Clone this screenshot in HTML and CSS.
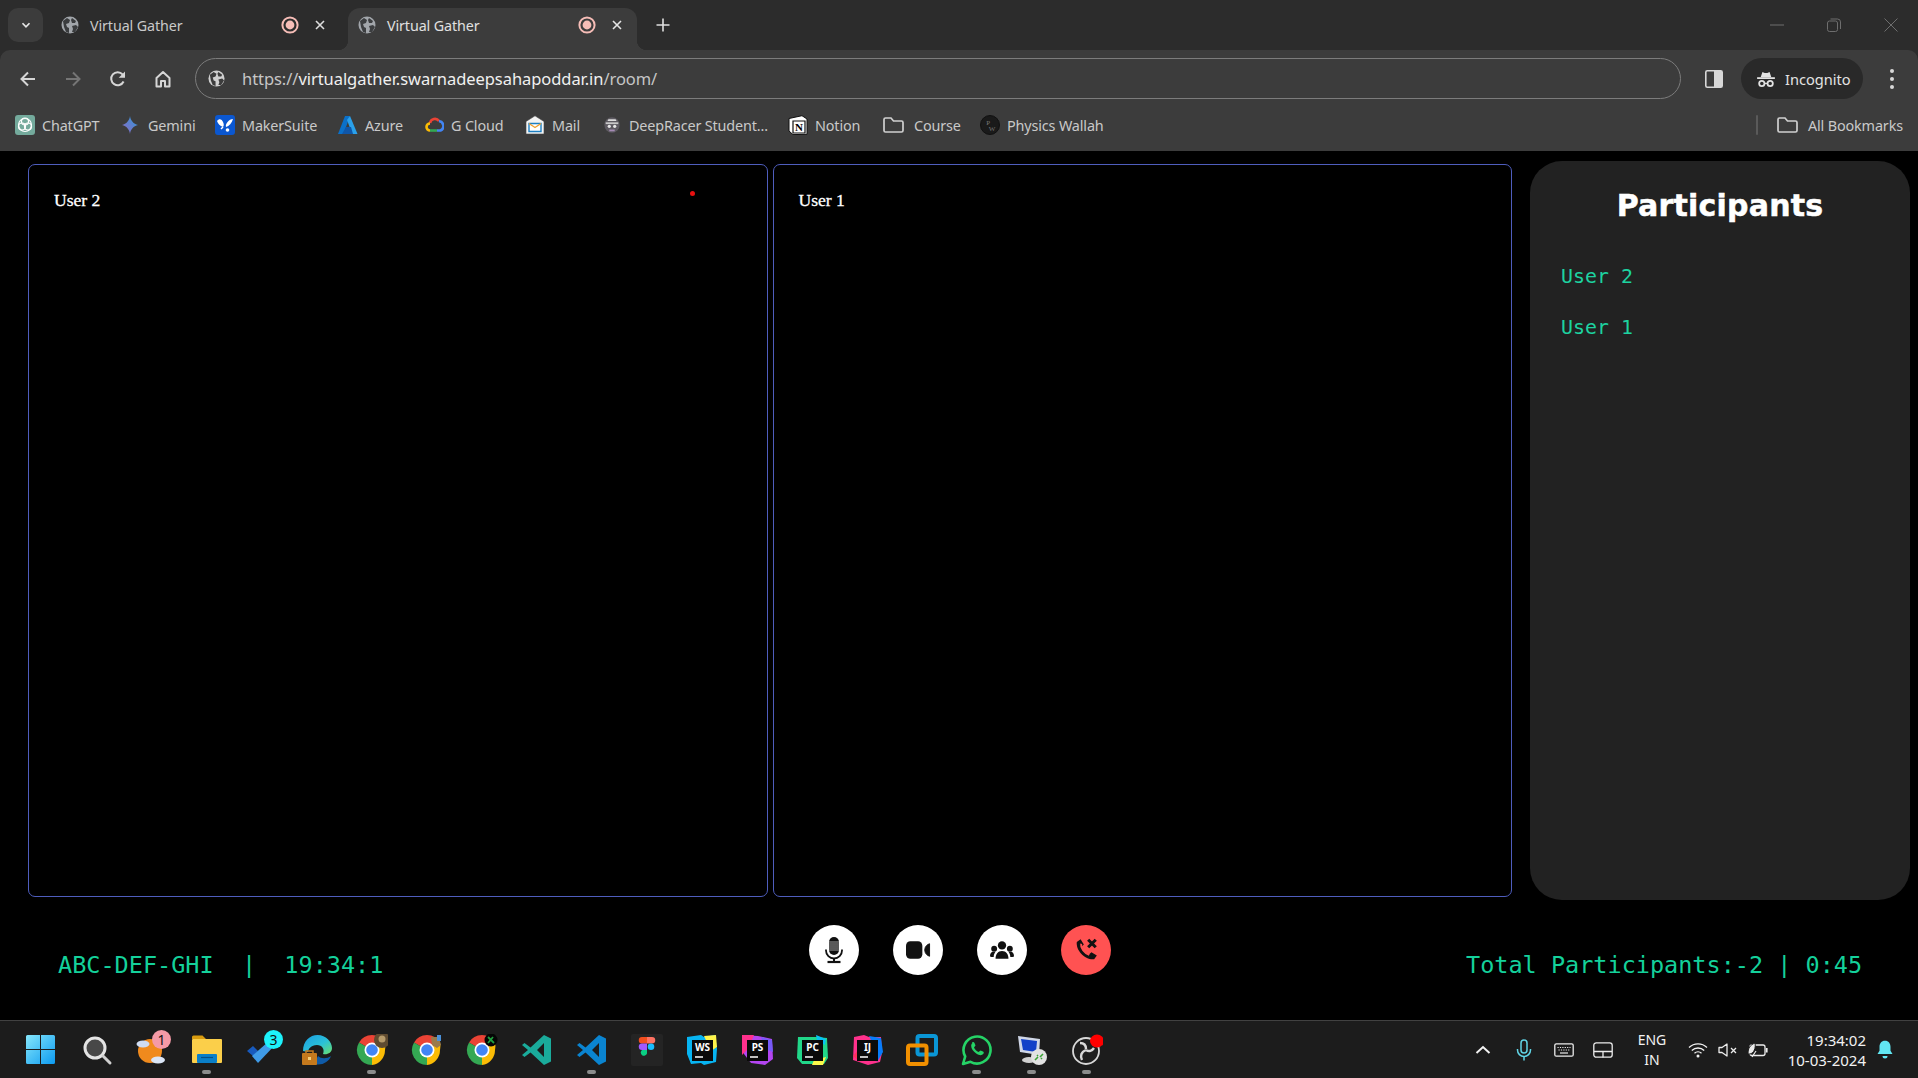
FILE: index.html
```html
<!DOCTYPE html>
<html lang="en">
<head>
<meta charset="utf-8">
<title>Virtual Gather</title>
<link rel="stylesheet" href="styles.css">
</head>
<body>
<div class="screen">
  <header class="browser">
    <div class="tabstrip">
      <button class="tab-search"><svg class="i16" viewBox="0 0 16 16"><path d="M4 6l4 4 4-4" fill="none" stroke="#e6e6e6" stroke-width="2"/></svg></button>
      <div class="tab">
        <svg class="globe" viewBox="0 0 18 18"><circle cx="9" cy="9" r="8.5" fill="#a2a6ab"/><path d="M2 5l4-3 3 2-1 3-3 1 1 3 2 1v5l-3-1-2-5zM11 2l4 3-1 2h-3l-1-3zM11 10l4-1 2 2-3 5-3 0 1-3z" fill="#3a3c3e"/></svg>
        <span class="tab-title">Virtual Gather</span>
        <svg class="rec" viewBox="0 0 18 18"><circle cx="9" cy="9" r="7.6" fill="none" stroke="#f6bdb7" stroke-width="2"/><circle cx="9" cy="9" r="4.4" fill="#f6bdb7"/></svg>
        <svg class="close" viewBox="0 0 12 12"><path d="M2 2l8 8M10 2l-8 8" stroke="#dedede" stroke-width="1.6"/></svg>
      </div>
      <div class="tab tab-active">
        <svg class="globe" viewBox="0 0 18 18"><circle cx="9" cy="9" r="8.5" fill="#a2a6ab"/><path d="M2 5l4-3 3 2-1 3-3 1 1 3 2 1v5l-3-1-2-5zM11 2l4 3-1 2h-3l-1-3zM11 10l4-1 2 2-3 5-3 0 1-3z" fill="#3c3e40"/></svg>
        <span class="tab-title">Virtual Gather</span>
        <svg class="rec" viewBox="0 0 18 18"><circle cx="9" cy="9" r="7.6" fill="none" stroke="#f6bdb7" stroke-width="2"/><circle cx="9" cy="9" r="4.4" fill="#f6bdb7"/></svg>
        <svg class="close" viewBox="0 0 12 12"><path d="M2 2l8 8M10 2l-8 8" stroke="#e6e6e6" stroke-width="1.6"/></svg>
      </div>
      <svg class="newtab" viewBox="0 0 16 16"><path d="M8 1.500v13M1.500 8h13" stroke="#e0e0e0" stroke-width="1.600"/></svg>
      <div class="winctl">
        <svg class="wc" viewBox="0 0 14 14"><path d="M0 7h14" stroke="#6e6e6e" stroke-width="1"/></svg>
        <svg class="wc" viewBox="0 0 14 14"><rect x=".5" y="3" width="10" height="10.500" rx="2" fill="none" stroke="#6e6e6e"/><path d="M3.500 1h7a3 3 0 0 1 3 3v7" fill="none" stroke="#6e6e6e"/></svg>
        <svg class="wc" viewBox="0 0 14 14"><path d="M.5.5l13 13M13.500.5l-13 13" stroke="#6e6e6e" stroke-width="1"/></svg>
      </div>
    </div>
    <div class="chrome-body">
      <div class="toolbar">
        <svg class="nav" viewBox="0 0 18 18"><path d="M16 9H3M9 2.500L2.500 9 9 15.500" fill="none" stroke="#d6d6d6" stroke-width="2"/></svg>
        <svg class="nav" viewBox="0 0 18 18"><path d="M2 9h13M9 2.500L15.500 9 9 15.500" fill="none" stroke="#757575" stroke-width="2"/></svg>
        <svg class="nav" viewBox="0 0 18 18"><path d="M14.600 11.500A6.500 6.500 0 1 1 13.600 4.400L15.500 6.500" fill="none" stroke="#d6d6d6" stroke-width="2"/><path d="M16 1.500v6.300H9.700z" fill="#d6d6d6"/></svg>
        <svg class="nav" viewBox="0 0 18 18"><path d="M2.500 8L9 2l6.500 6v8.500H11V11H7v5.500H2.500z" fill="none" stroke="#d6d6d6" stroke-width="2" stroke-linejoin="round"/></svg>
        <div class="omnibox">
          <svg class="omni-globe" viewBox="0 0 18 18"><circle cx="9" cy="9" r="8.500" fill="#d0d0d0"/><path d="M2 5l4-3 3 2-1 3-3 1 1 3 2 1v5l-3-1-2-5zM11 2l4 3-1 2h-3l-1-3zM11 10l4-1 2 2-3 5-3 0 1-3z" fill="#3c3c3c"/></svg>
          <span class="url"><span class="url-dim">https://</span>virtualgather.swarnadeepsahapoddar.in<span class="url-dim">/room/</span></span>
        </div>
        <svg class="sidepanel" viewBox="0 0 18 18"><rect x=".8" y=".8" width="16.400" height="16.400" rx="1.500" fill="none" stroke="#d8d8d8" stroke-width="1.600"/><rect x="9" y="1" width="8" height="16" fill="#d8d8d8"/></svg>
        <div class="incognito">
          <svg class="inc-icon" viewBox="0 0 20 18"><path d="M4 7l2-6 2.500 1.200h3L14 1l2 6z" fill="#e2e2e2"/><path d="M0 8h20" stroke="#e2e2e2" stroke-width="2"/><circle cx="5.300" cy="14" r="3" fill="none" stroke="#e2e2e2" stroke-width="2"/><circle cx="14.700" cy="14" r="3" fill="none" stroke="#e2e2e2" stroke-width="2"/><path d="M8.300 14h3.400" stroke="#e2e2e2" stroke-width="1.500"/></svg>
          <span>Incognito</span>
        </div>
        <svg class="dots" viewBox="0 0 6 22"><circle cx="3" cy="3" r="2" fill="#d8d8d8"/><circle cx="3" cy="11" r="2" fill="#d8d8d8"/><circle cx="3" cy="19" r="2" fill="#d8d8d8"/></svg>
      </div>
      <nav class="bookmarks">
        <a class="bm"><svg class="fav" viewBox="0 0 20 20"><rect width="20" height="20" rx="3" fill="#74aa9c"/><g fill="none" stroke="#fff" stroke-width="1.200"><circle cx="10" cy="6.500" r="3.500"/><circle cx="7" cy="11.500" r="3.500"/><circle cx="13" cy="11.500" r="3.500"/><circle cx="10" cy="10" r="6.500"/></g></svg><span>ChatGPT</span></a>
        <a class="bm"><svg class="fav" viewBox="0 0 20 20"><defs><linearGradient id="gem" x1="0" y1="1" x2="1" y2="0"><stop offset="0" stop-color="#9168c0"/><stop offset=".6" stop-color="#5684d1"/><stop offset="1" stop-color="#1ba1e3"/></linearGradient></defs><path d="M9 1c.6 4.500 3.500 8 8 9-4.500 1-7.400 4.500-8 9-.6-4.500-3.500-8-8-9 4.500-1 7.400-4.500 8-9z" fill="url(#gem)"/></svg><span>Gemini</span></a>
        <a class="bm"><svg class="fav" viewBox="0 0 20 20"><rect width="20" height="20" rx="3" fill="#0b57d0"/><path d="M2 6c2-3 5-2 6 1 1 2 1 4 0 5C5 11 3 9 2 6zM18 4c-1 4-4 7-7 8-1-3 3-8 7-8z" fill="#fff"/><circle cx="12.500" cy="15" r="1.800" fill="#fff"/><path d="M6 14l2-2" stroke="#fff" stroke-width="1.500"/></svg><span>MakerSuite</span></a>
        <a class="bm"><svg class="fav" viewBox="0 0 20 20"><path d="M7 1h5L5.500 19H0z" fill="#0a70c9"/><path d="M12 1l7.500 18h-5.200L9 5z" fill="#2aa0ea"/><path d="M8 12h5l2 7H4z" fill="#0f56a8"/></svg><span>Azure</span></a>
        <a class="bm"><svg class="fav" viewBox="0 0 20 20"><path d="M6 8a5 5 0 0 1 9-2" fill="none" stroke="#ea4335" stroke-width="2.600"/><path d="M15 6a5 5 0 0 1 1.500 9.500H13" fill="none" stroke="#4285f4" stroke-width="2.600"/><path d="M13 15.500H6" stroke="#34a853" stroke-width="2.600"/><path d="M6 15.500A3.500 3.500 0 0 1 6 8.500" fill="none" stroke="#fbbc05" stroke-width="2.600"/></svg><span>G Cloud</span></a>
        <a class="bm"><svg class="fav" viewBox="0 0 20 20"><path d="M10 .8L19 6.500V19H1V6.500z" fill="#f4f4f4" stroke="#444" stroke-width=".6"/><path d="M4 8.500h12v8H4z" fill="#fff" stroke="#1d7fc2" stroke-width="1.400"/><path d="M4 8.500l6 4 6-4" fill="none" stroke="#f0a030" stroke-width="1.400"/></svg><span>Mail</span></a>
        <a class="bm"><svg class="fav fav-small" viewBox="0 0 20 20"><circle cx="10" cy="10" r="8.500" fill="#5d5a61"/><path d="M3 7h14v2H3z" fill="#c8c8c8"/><circle cx="7" cy="11.500" r="1.800" fill="#e6e6e6"/><circle cx="13" cy="11.500" r="1.800" fill="#e6e6e6"/><path d="M6 3.500h8l1 2H5z" fill="#ddd"/><path d="M7 15h6v2H7z" fill="#a58ab4"/></svg><span>DeepRacer Student...</span></a>
        <a class="bm"><svg class="fav" viewBox="0 0 20 20"><path d="M1 3.500L14 .7 19 4v15.300L5 19.600 1 16z" fill="#fff" stroke="#111" stroke-width="1"/><path d="M5 6h12v12H5z" fill="#fff" stroke="#111" stroke-width="1.200"/><text class="fav-n" x="11" y="16" text-anchor="middle">N</text></svg><span>Notion</span></a>
        <a class="bm bm-folder"><svg class="fav-folder" viewBox="0 0 21 18"><path d="M1 3.500a1.500 1.500 0 0 1 1.500-1.500H8l2.500 3h8a1.500 1.500 0 0 1 1.500 1.500v8a1.500 1.500 0 0 1-1.500 1.500h-16A1.500 1.500 0 0 1 1 14.500z" fill="none" stroke="#d0d0d0" stroke-width="1.700"/></svg><span>Course</span></a>
        <a class="bm"><svg class="fav" viewBox="0 0 20 20"><circle cx="10" cy="10" r="9.500" fill="#1a1a1a" stroke="#111"/><text class="fav-pw" x="8" y="10" text-anchor="middle">P</text><text class="fav-pw" x="12" y="16" text-anchor="middle">W</text></svg><span>Physics Wallah</span></a>
        <i class="bm-sep"></i>
        <a class="bm"><svg class="fav-folder" viewBox="0 0 21 18"><path d="M1 3.500a1.500 1.500 0 0 1 1.500-1.500H8l2.500 3h8a1.500 1.500 0 0 1 1.500 1.500v8a1.500 1.500 0 0 1-1.500 1.500h-16A1.500 1.500 0 0 1 1 14.500z" fill="none" stroke="#d0d0d0" stroke-width="1.700"/></svg><span>All Bookmarks</span></a>
      </nav>
    </div>
  </header>

  <main class="room">
    <div class="stage">
      <div class="tiles">
        <section class="tile"><span class="tile-name">User 2</span><i class="speck"></i></section>
        <section class="tile"><span class="tile-name">User 1</span></section>
      </div>
      <aside class="panel">
        <h2 class="panel-title">Participants</h2>
        <ul class="people">
          <li>User 2</li>
          <li>User 1</li>
        </ul>
      </aside>
    </div>
    <footer class="callbar">
      <div class="info info-left">ABC-DEF-GHI&nbsp; |&nbsp; 19:34:1</div>
      <div class="controls">
        <button class="ctl"><svg viewBox="0 0 24 28" class="ctl-i"><rect x="7" y="1" width="10" height="18" rx="5" fill="#111"/><path d="M7 6h10M7 8h10M7 10h10M7 12h10M7 14h10" stroke="#c8c8c8" stroke-width=".8"/><path d="M4 13.500v1a8 8 0 0 0 16 0v-1" fill="none" stroke="#111" stroke-width="1.800"/><path d="M12 22v3" stroke="#111" stroke-width="2"/><path d="M5.500 26h13" stroke="#111" stroke-width="2.200"/></svg></button>
        <button class="ctl"><svg viewBox="0 0 26 18" class="ctl-v"><rect x="0" y="0" width="17" height="18" rx="4.500" fill="#111"/><path d="M24.500 2.500v13c-2.500-.8-5-3-5-6.500s2.500-5.700 5-6.500z" fill="#111" stroke="#111" stroke-linejoin="round"/></svg></button>
        <button class="ctl"><svg viewBox="0 0 26 20" class="ctl-g"><circle cx="13" cy="4.500" r="4.500" fill="#111"/><path d="M6 19c0-5 2.500-8.500 7-8.500s7 3.500 7 8.500z" fill="#111"/><circle cx="4.500" cy="8" r="3.200" fill="#111"/><circle cx="21.500" cy="8" r="3.200" fill="#111"/><path d="M0 16c0-3 1.500-5 4.500-5 .6 0 1 .1 1.500.3C4.700 12.800 4 15 4 17H1.500C.5 17 0 16.600 0 16zM26 16c0-3-1.500-5-4.500-5-.6 0-1 .1-1.500.3 1.300 1.500 2 3.700 2 5.700h2.500c1 0 1.500-.4 1.500-1z" fill="#111"/></svg></button>
        <button class="ctl ctl-end"><svg viewBox="0 0 24 24" class="ctl-p"><path d="M3.500 4.500L7 2l3 5-2.500 2.300c1 3.200 3.800 6 7 7L17 14l5 3-2.500 3.500C11.500 21.500 2.500 12.500 3.500 4.500z" fill="#111"/><path d="M7.500 6.200C6.800 10 10.500 14.800 15 16.500" fill="none" stroke="#ff5252" stroke-width="1.800"/><path d="M14 2.500l7 7M21 2.500l-7 7" stroke="#111" stroke-width="2.800"/></svg></button>
      </div>
      <div class="info info-right">Total Participants:-2 | 0:45</div>
    </footer>
  </main>

  <div class="taskbar">
    <div class="apps">
      <div class="app"><svg class="ti ti-start" viewBox="0 0 29 29"><defs><linearGradient id="win" x1="0" y1="0" x2="1" y2="1"><stop offset="0" stop-color="#86e7fb"/><stop offset="1" stop-color="#0c9af0"/></linearGradient></defs><path d="M0 1.500A1.500 1.500 0 0 1 1.500 0H14v14H0zM15 0h12.500A1.500 1.500 0 0 1 29 1.500V14H15zM0 15h14v14H1.500A1.500 1.500 0 0 1 0 27.500zM15 15h14v12.500a1.500 1.500 0 0 1-1.500 1.500H15z" fill="url(#win)"/></svg></div>
      <div class="app"><svg class="ti" viewBox="0 0 32 32"><circle cx="14" cy="14" r="10" fill="#484848" stroke="#e4e4e4" stroke-width="3"/><path d="M22 22l7 7" stroke="#cfcfcf" stroke-width="3" stroke-linecap="round"/></svg></div>
      <div class="app"><svg class="ti" viewBox="0 0 32 32"><circle cx="14" cy="17" r="12" fill="#f08a1d"/><ellipse cx="7" cy="10" rx="6.500" ry="3.500" fill="#cfdcf2"/><ellipse cx="22" cy="26" rx="7" ry="3.500" fill="#dbe6f7"/></svg><b class="badge badge-pink">1</b></div>
      <div class="app app-on"><svg class="ti" viewBox="0 0 32 32"><path d="M1 3a1.500 1.500 0 0 1 1.500-1.500h9L15 5h-14z" fill="#d99c0f"/><rect x="1" y="5" width="30" height="24" rx="1" fill="#fbcf4a"/><rect x="6" y="20" width="20" height="9" rx="1" fill="#0a7fc8"/><path d="M10 23.500h12" stroke="#064f85" stroke-width="1.200"/></svg></div>
      <div class="app"><svg class="ti" viewBox="0 0 32 32"><path d="M1 17l6-5 5 5-5 5z" fill="#185abd"/><path d="M6 22L22 8l6 4-16 17z" fill="#3f9be8"/></svg><b class="badge badge-cyan">3</b></div>
      <div class="app"><svg class="ti" viewBox="0 0 32 32"><defs><linearGradient id="edge" x1="0" y1="0" x2="1" y2="1"><stop offset="0" stop-color="#1b9de2"/><stop offset=".55" stop-color="#2ac0d8"/><stop offset="1" stop-color="#6ce06a"/></linearGradient></defs><path d="M2 17C2 7 9 1 16.500 1 25 1 31 8 31 14c0 5-5 7-9 6 2-5-1-9-6-9-6 0-9 4-9 7z" fill="url(#edge)"/><path d="M13 30c8 2 15-2 17-8-4 3-10 3-13 0z" fill="#0f5ba8"/><rect x="1" y="19" width="15" height="12" rx="1" fill="#c4791d"/><path d="M5 19v-2h7v2" fill="none" stroke="#c4791d" stroke-width="1.500"/><rect x="7" y="23" width="3" height="3" fill="#f4cf7a"/></svg></div>
      <div class="app app-on"><svg class="ti" viewBox="0 0 32 32"><use href="#chrome"/><circle cx="26" cy="6" r="8" fill="#5f4b30"/><circle cx="26" cy="5" r="3.500" fill="#b59a6a"/></svg></div>
      <div class="app"><svg class="ti" viewBox="0 0 32 32"><use href="#chrome"/><path d="M20 3h8l2 8-4 3-5-3z" fill="#9a7a4a"/><path d="M26 1h4v6h-4z" fill="#4a90d8"/></svg></div>
      <div class="app"><svg class="ti" viewBox="0 0 32 32"><use href="#chrome"/><circle cx="25" cy="6" r="6.500" fill="#050505"/><path d="M22 3l6 6M27 3l-5 6" stroke="#20a040" stroke-width="1.800"/></svg></div>
      <div class="app"><svg class="ti" viewBox="0 0 32 32"><use href="#vs" fill="#1aab9b"/></svg></div>
      <div class="app app-on"><svg class="ti" viewBox="0 0 32 32"><use href="#vs" fill="#0a84d0"/></svg></div>
      <div class="app"><svg class="ti" viewBox="0 0 32 32"><rect width="32" height="32" rx="2" fill="#242424"/><path d="M11 3h5v6.500h-5a3.200 3.200 0 0 1 0-6.500z" fill="#f24e1e"/><path d="M16 3h5a3.200 3.200 0 0 1 0 6.500h-5z" fill="#ff7262"/><path d="M11 9.500h5V16h-5a3.200 3.200 0 0 1 0-6.500z" fill="#a259ff"/><circle cx="20" cy="12.800" r="3.300" fill="#1abcfe"/><path d="M11 16h5v3.500a3.200 3.200 0 1 1-5-3.500z" fill="#0acf83"/></svg></div>
      <div class="app"><svg class="ti" viewBox="0 0 32 32"><path d="M1 3l14-2 3 2 11-2 2 14-1 13-12 3-3-2-10 1L1 20z" fill="#07b4f2"/><path d="M18 2l12-1 1 12-6 4z" fill="#fff34a"/><rect x="6" y="6" width="21" height="21" fill="#0a0a0a"/><text class="jb" x="16.500" y="17" text-anchor="middle">WS</text><path d="M9 23h8" stroke="#fff" stroke-width="1.500"/></svg></div>
      <div class="app"><svg class="ti" viewBox="0 0 32 32"><path d="M1 1l16 1 14 3 1 20-8 6-14-2-7-9z" fill="#b345f1"/><path d="M1 1l12 0-6 14-6 6z" fill="#ff318c"/><path d="M20 3l11 3 1 12-8-3z" fill="#765af8"/><rect x="6" y="6" width="21" height="21" fill="#0a0a0a"/><text class="jb" x="16.500" y="17" text-anchor="middle">PS</text><path d="M9 23h8" stroke="#fff" stroke-width="1.500"/></svg></div>
      <div class="app"><svg class="ti" viewBox="0 0 32 32"><path d="M2 3l18 0 11 1 1 20-4 6H6l-5-6z" fill="#21d789"/><path d="M18 26l12-3-3 8-11 0z" fill="#fcf84a"/><path d="M20 1l10 4-1 6-8-4z" fill="#07c3f2"/><rect x="6" y="6" width="21" height="21" fill="#0a0a0a"/><text class="jb" x="16.500" y="17" text-anchor="middle">PC</text><path d="M9 23h8" stroke="#fff" stroke-width="1.500"/></svg></div>
      <div class="app"><svg class="ti" viewBox="0 0 32 32"><path d="M3 3l10-2 5 2 12 0 1 16-2 9-12 3-9-3-6-2z" fill="#ff318c"/><path d="M18 2l12 2 2 14-6 10-4-18z" fill="#087cfa"/><path d="M2 22l7-8 0 14z" fill="#fe315d"/><rect x="6" y="6" width="21" height="21" fill="#0a0a0a"/><text class="jb" x="16.500" y="17" text-anchor="middle">IJ</text><path d="M9 23h8" stroke="#fff" stroke-width="1.500"/></svg></div>
      <div class="app"><svg class="ti" viewBox="0 0 32 32"><rect x="11.500" y="2" width="18.500" height="18.500" rx="2" fill="none" stroke="#0a96d6" stroke-width="4"/><rect x="2" y="11.500" width="18.500" height="18.500" rx="2" fill="none" stroke="#f29000" stroke-width="4"/></svg></div>
      <div class="app app-on"><svg class="ti" viewBox="0 0 32 32"><path d="M2 30l2.200-7.500A13.500 13.500 0 1 1 9.500 27.800z" fill="none" stroke="#25d366" stroke-width="2.600" stroke-linejoin="round"/><path d="M11 8.500c1-.8 2-.5 2.500.5l1 2.500-1.500 2c1 2 2.500 3.500 4.500 4.500l2-1.500 2.500 1c1 .5 1 1.500.2 2.500-1.500 1.700-4 1.500-7-.5-3-2-5-5-5-7.500 0-1.300.4-2.300 1.300-3z" fill="#25d366"/></svg></div>
      <div class="app app-on"><svg class="ti" viewBox="0 0 32 32"><path d="M2 2l22 3-1 16-19-3z" fill="#cfd6e6"/><path d="M5 5l16 2-1 11-13-2z" fill="#1240c8"/><ellipse cx="13" cy="26" rx="7" ry="3" fill="#d0d0d0"/><circle cx="23" cy="23" r="8" fill="#e2e2e2"/><path d="M19 26l3-3M27 20l-3 3M21 21l1 1M25 24l1 1" stroke="#3aa335" stroke-width="1.600"/></svg></div>
      <div class="app app-on"><svg class="ti" viewBox="0 0 32 32"><circle cx="15" cy="17" r="13" fill="#1e1e1e" stroke="#d8d8d8" stroke-width="1.800"/><path d="M9 9c4 0 6 2 6 6M23 14c-2 3-5 4-8 2M11 26c-2-4-1-8 4-10" fill="none" stroke="#d8d8d8" stroke-width="2.400"/><ellipse cx="26" cy="7" rx="7" ry="6.500" fill="#ff0000"/></svg></div>
    </div>
    <div class="tray">
      <svg class="tray-chev" viewBox="0 0 16 10"><path d="M1.500 8L8 2l6.500 6" fill="none" stroke="#f2f2f2" stroke-width="2"/></svg>
      <svg class="tray-mic" viewBox="0 0 16 22"><rect x="5" y="1" width="6" height="13" rx="3" fill="none" stroke="#61d5e6" stroke-width="1.500"/><path d="M1.500 10v1a6.500 6.500 0 0 0 13 0v-1M8 18v3.500" fill="none" stroke="#61d5e6" stroke-width="1.500"/></svg>
      <svg class="tray-kbd" viewBox="0 0 20 14"><rect x=".8" y=".8" width="18.400" height="12.400" rx="1.500" fill="none" stroke="#ececec" stroke-width="1.300"/><path d="M3.500 4.500h13M4.500 7h11" stroke="#ececec" stroke-width="1.200" stroke-dasharray="1.200 1.200"/><path d="M6 10h8" stroke="#ececec" stroke-width="1.200"/></svg>
      <svg class="tray-pad" viewBox="0 0 20 16"><rect x=".8" y=".8" width="18.400" height="14.400" rx="2.500" fill="none" stroke="#ececec" stroke-width="1.300"/><path d="M1 9.500h18M10 9.500v6" stroke="#ececec" stroke-width="1.300"/></svg>
      <div class="lang"><span>ENG</span><span>IN</span></div>
      <svg class="tray-wifi" viewBox="0 0 20 16"><path d="M1 5.500a13 13 0 0 1 18 0M3.800 8.500a9 9 0 0 1 12.400 0M6.500 11.300a5 5 0 0 1 7 0" fill="none" stroke="#f2f2f2" stroke-width="1.300"/><circle cx="10" cy="14" r="1.500" fill="#f2f2f2"/></svg>
      <svg class="tray-vol" viewBox="0 0 20 14"><path d="M1 4.500h3L9 1v12L4 9.500H1z" fill="none" stroke="#ececec" stroke-width="1.300" stroke-linejoin="round"/><path d="M13 5l5 5M18 5l-5 5" stroke="#ececec" stroke-width="1.300"/></svg>
      <svg class="tray-bat" viewBox="0 0 21 16"><rect x="3" y="3" width="15" height="10.500" rx="2" fill="none" stroke="#ececec" stroke-width="1.300"/><rect x="18.800" y="6" width="1.800" height="4.500" fill="#ececec"/><path d="M1 12c0-6 2-9 7-11 1 5-1 10-5 11z" fill="#ececec" stroke="#1c1c1c"/><path d="M5 15l4-6" stroke="#ececec" stroke-width="1.200"/></svg>
      <div class="clock"><span>19:34:02</span><span>10-03-2024</span></div>
      <svg class="tray-bell" viewBox="0 0 16 20"><path d="M8 .8c3.600 0 5.500 2.700 5.500 6v4l2 3.200H.5l2-3.200v-4C2.500 3.500 4.400.8 8 .8z" fill="#61e6f2"/><path d="M5.500 16h5a2.500 2.500 0 0 1-5 0z" fill="#61e6f2"/></svg>
    </div>
  </div>
</div>
<svg class="defs" width="0" height="0">
  <defs>
    <symbol id="chrome" viewBox="0 0 32 32">
      <path d="M16 16L3 8.500A15 15 0 0 1 29 8.500z" fill="#ea4335"/>
      <path d="M16 16L3 8.500A15 15 0 0 0 16 31z" fill="#34a853"/>
      <path d="M16 16H29A15 15 0 0 1 16 31L16 16z" fill="#fbbc05"/>
      <path d="M16 16L29 8.500A15 15 0 0 1 29 16z" fill="#fbbc05"/>
      <circle cx="16" cy="16" r="7.500" fill="#fff"/>
      <circle cx="16" cy="16" r="5.800" fill="#4285f4"/>
    </symbol>
    <symbol id="vs" viewBox="0 0 32 32">
      <path d="M23 1l7 3.500v23L23 31 9.500 18.500 3.500 23 1 21l6-5-6-5 2.500-2 6 4.500zM23 9l-7 7 7 7z"/>
    </symbol>
  </defs>
</svg>
</body>
</html>
```
FILE: styles.css
```css
* { box-sizing: border-box; }
html, body { margin: 0; padding: 0; background: #000; }
body { width: 1918px; height: 1078px; overflow: hidden; }
svg { display: block; flex: none; }
.defs { position: absolute; }
.screen { display: flex; flex-direction: column; height: 1078px; font-family: "Noto Sans", "Open Sans", sans-serif; }

/* tab strip */
.browser { flex: none; background: #2c2c2c; }
.tabstrip { display: flex; align-items: flex-start; height: 50px; padding: 8px 0 0 8px; }
.tab-search { width: 35px; height: 34px; border: 0; padding: 0; border-radius: 10px; background: #3c3c3c; display: flex; align-items: center; justify-content: center; margin-right: 8px; }
.i16 { width: 14px; height: 14px; }
.tab { position: relative; width: 289px; height: 42px; margin-right: 8px; display: flex; align-items: center; padding: 0 0 8px 10px; color: #c9c9c9; font-size: 14.3px; border-radius: 12px 12px 0 0; }
.tab-active { background: #3c3c3c; color: #e0e0e0; }
.tab-active::before, .tab-active::after { content: ""; position: absolute; bottom: 0; width: 10px; height: 10px; }
.tab-active::before { left: -10px; background: radial-gradient(circle at 0 0, transparent 10px, #3c3c3c 10.500px); }
.tab-active::after { right: -10px; background: radial-gradient(circle at 100% 0, transparent 10px, #3c3c3c 10.500px); }
.globe { width: 18px; height: 18px; margin-right: 11px; }
.tab-title { width: 184px; white-space: nowrap; letter-spacing: -.1px; }
.rec { width: 18px; height: 18px; margin-left: 7px; }
.close { width: 12px; height: 12px; margin-left: 15px; }
.newtab { width: 16px; height: 16px; margin: 9px 0 0 10px; }
.winctl { margin-left: auto; display: flex; gap: 43px; padding: 10px 20px 0 0; }
.wc { width: 14px; height: 14px; }

/* toolbar */
.chrome-body { background: #3c3c3c; border-radius: 10px 10px 0 0; height: 101px; }
.toolbar { display: flex; align-items: center; height: 57px; padding-left: 19px; }
.nav { width: 18px; height: 18px; margin-right: 27px; }
.omnibox { width: 1486px; height: 41px; margin-left: -4px; border: 1px solid #7c7c7c; border-radius: 21px; display: flex; align-items: center; padding-left: 12px; }
.omni-globe { width: 17px; height: 17px; margin-right: 17px; }
.url { color: #f0f0f0; font-size: 16.5px; letter-spacing: -.06px; white-space: nowrap; }
.url-dim { color: #c6c6c6; }
.sidepanel { width: 18px; height: 18px; margin-left: 24px; }
.incognito { width: 122px; height: 41px; margin-left: 18px; background: #292929; border-radius: 21px; display: flex; align-items: center; padding-left: 16px; color: #e3e3e3; font-size: 14.6px; }
.inc-icon { width: 18px; height: 16px; margin-right: 10px; }
.dots { width: 6px; height: 22px; margin-left: 26px; }

/* bookmarks */
.bookmarks { display: grid; grid-template-columns: 106px 94px 123px 86px 101px 78px 185px 95px 97px 776px 21px 1fr; align-items: center; height: 44px; padding: 0 0 8px 15px; }
.bm { display: flex; align-items: center; font-size: 14.4px; letter-spacing: -.15px; color: #c9c9c9; white-space: nowrap; }
.fav { width: 20px; height: 20px; margin-right: 7px; }
.fav-small { width: 18px; height: 18px; margin-right: 8px; }
.fav-folder { width: 21px; height: 18px; margin-right: 10px; }
.fav-n { font: 700 11px "Liberation Serif", serif; fill: #000; }
.fav-pw { font: 400 7px "Liberation Serif", serif; fill: #777; }
.bm-sep { height: 20px; width: 2px; background: #5a5a5a; border-radius: 1px; }

/* room */
.room { flex: none; height: 869px; background: #000; display: flex; flex-direction: column; }
.stage { display: flex; align-items: flex-start; padding-left: 28px; height: 749px; }
.tiles { display: flex; gap: 5px; margin-top: 13px; }
.tile { position: relative; width: 739.5px; height: 733px; border: 1px solid #4e5dbd; border-radius: 7px; padding: 24px 25px; }
.tile-name { color: #fff; font: 400 17.600px "Liberation Serif", serif; -webkit-text-stroke: .3px #fff; }
.speck { position: absolute; left: 661px; top: 26px; width: 5px; height: 5px; border-radius: 50%; background: #e81010; }
.panel { width: 380px; height: 739px; margin: 10px 0 0 18px; background: #222; border-radius: 32px; padding: 27px 20px 0 31px; }
.panel-title { margin: 0 0 0 -11px; text-align: center; color: #fff; font: 700 30px "DejaVu Sans", sans-serif; letter-spacing: .2px; line-height: 36px; -webkit-text-stroke: .5px #fff; }
.people { list-style: none; margin: 27px 0 0; padding: 0; color: #1dd3a0; font: 400 19.900px "DejaVu Sans Mono", monospace; }
.people li { height: 51px; line-height: 51px; }

/* call bar */
.callbar { display: flex; align-items: flex-start; height: 120px; padding-left: 58px; }
.info { color: #14d19b; font: 400 23.500px/28px "DejaVu Sans Mono", monospace; white-space: nowrap; margin-top: 51px; }
.info-left { width: 751px; }
.controls { width: 302px; display: flex; justify-content: space-between; margin-top: 25px; }
.ctl { width: 50px; height: 50px; border: 0; padding: 0; border-radius: 50%; background: #fff; display: flex; align-items: center; justify-content: center; }
.ctl-end { background: #ff5252; }
.ctl-i { width: 24px; height: 28px; }
.ctl-v { width: 25px; height: 18px; }
.ctl-g { width: 24px; height: 19px; }
.ctl-p { width: 26px; height: 26px; }
.info-right { margin-left: 355px; }

/* taskbar */
.taskbar { flex: none; height: 58px; background: #1c1c1c; border-top: 1px solid #414141; display: flex; color: #f2f2f2; }
.apps { display: flex; width: 1200px; padding-left: 14px; }
.app { position: relative; width: 55px; height: 57px; display: flex; align-items: center; justify-content: center; }
.ti { width: 32px; height: 32px; }
.ti-start { width: 29px; height: 29px; margin-right: 3px; }
.app-on::after { content: ""; position: absolute; left: 23px; bottom: 4px; width: 9px; height: 4px; border-radius: 2px; background: #8c8c8c; }
.badge { position: absolute; top: 8.5px; width: 19px; height: 19px; border-radius: 50%; font: 400 14px/19px "Noto Sans", sans-serif; text-align: center; color: #111; }
.badge-pink { left: 28px; background: #f59aa6; }
.badge-cyan { left: 30px; background: #1df2fb; }
.jb { font: 700 10px "Noto Sans", sans-serif; fill: #fff; }
.tray { flex: 1; display: flex; align-items: center; padding-left: 275px; }
.tray-chev { width: 16px; height: 10px; }
.tray-mic { width: 16px; height: 22px; margin-left: 25px; }
.tray-kbd { width: 20px; height: 14px; margin-left: 22px; }
.tray-pad { width: 20px; height: 16px; margin-left: 19px; }
.lang { width: 34px; margin-left: 22px; display: flex; flex-direction: column; align-items: center; font-size: 14px; line-height: 20px; }
.tray-wifi { width: 20px; height: 16px; margin-left: 19px; }
.tray-vol { width: 20px; height: 14px; margin-left: 10px; }
.tray-bat { width: 21px; height: 16px; margin-left: 9px; }
.clock { width: 98px; display: flex; flex-direction: column; align-items: flex-end; font-size: 15px; line-height: 20px; }
.tray-bell { width: 16px; height: 20px; margin-left: 11px; }
```
